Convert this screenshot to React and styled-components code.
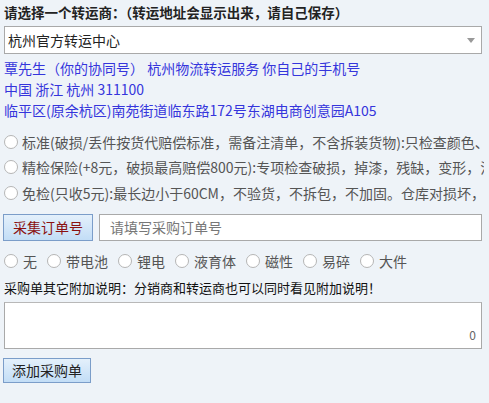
import React from "react";
import styled, { createGlobalStyle } from "styled-components";

const GlobalStyle = createGlobalStyle`
  html, body {
    margin: 0;
    padding: 0;
    background: #eef3f8;
  }
  body {
    font-family: "Noto Sans CJK SC", "Noto Sans", sans-serif;
    font-size: 14px;
    color: #222;
  }
`;

const Page = styled.div`
  width: 489px;
  height: 403px;
  box-sizing: border-box;
  padding: 2px 7px 0 4px;
  overflow: hidden;
`;

const Title = styled.div`
  font-weight: bold;
  font-size: 13.5px;
  line-height: 20px;
  color: #222;
`;

const SelectBox = styled.div`
  margin-top: 4px;
  height: 28px;
  box-sizing: border-box;
  border: 1px solid #a9a9a9;
  background: #fff;
  display: flex;
  align-items: center;
  justify-content: space-between;
  padding: 0 6px 0 3px;
  font-size: 14px;
  color: #222;
`;

const Caret = styled.span`
  width: 0;
  height: 0;
  border-left: 4px solid transparent;
  border-right: 4px solid transparent;
  border-top: 5px solid #999;
`;

const Address = styled.div`
  margin-top: 4px;
  color: #3535dc;
  font-size: 14px;
  line-height: 21px;
`;

const OptionList = styled.div`
  margin-top: 8px;
  margin-right: -2px;
  display: flex;
  flex-direction: column;
`;

const OptionRow = styled.label`
  display: flex;
  align-items: center;
  gap: 4px;
  height: 25.5px;
  white-space: nowrap;
  overflow: hidden;
  color: #555;
  font-size: 14px;
`;

const Radio = styled.input.attrs({ type: "radio" })`
  appearance: none;
  flex: none;
  margin: 0;
  width: 14px;
  height: 14px;
  border: 1px solid #b5b5b5;
  border-radius: 50%;
  background: #fff;
  box-sizing: border-box;
`;

const OrderRow = styled.div`
  margin-top: 8px;
  display: flex;
  gap: 6px;
  height: 27px;
`;

const Button = styled.button`
  flex: none;
  height: ${(p) => p.$h || 27}px;
  padding: 0 ${(p) => p.$px || 9}px;
  margin-left: -1px;
  border: 1px solid #7b9dc9;
  background: linear-gradient(#e4f0fb, #c2ddf6);
  color: ${(p) => p.$color || "#222"};
  font-family: inherit;
  font-size: 14px;
  cursor: pointer;
`;

const TextInput = styled.input`
  flex: 1;
  box-sizing: border-box;
  border: 1px solid #a9a9a9;
  background: #fff;
  padding: 0 10px;
  font-family: inherit;
  font-size: 14px;
  &::placeholder {
    color: #777;
  }
`;

const TagRow = styled.div`
  margin-top: 8px;
  display: flex;
  align-items: center;
  height: 24px;
`;

const TagLabel = styled.label`
  display: flex;
  align-items: center;
  gap: 5px;
  margin-right: 10px;
  color: #555;
  font-size: 14px;
  white-space: nowrap;
`;

const NoteLabel = styled.div`
  margin-top: 5px;
  font-size: 13px;
  line-height: 20px;
  color: #111;
`;

const NoteWrap = styled.div`
  position: relative;
  margin-top: 4px;
  height: 47px;
`;

const NoteArea = styled.textarea`
  width: 100%;
  height: 100%;
  box-sizing: border-box;
  border: 1px solid #a9a9a9;
  border-top-color: #b8b8b8;
  background: #fff;
  resize: none;
  font-family: inherit;
  font-size: 13px;
  display: block;
`;

const Counter = styled.span`
  position: absolute;
  right: 6px;
  bottom: 6px;
  font-size: 12px;
  color: #666;
`;

const Footer = styled.div`
  margin-top: 9px;
`;

const options = [
  "标准(破损/丢件按货代赔偿标准，需备注清单，不含拆装货物):只检查颜色、尺码、数量",
  "精检保险(+8元，破损最高赔偿800元):专项检查破损，掉漆，残缺，变形，污渍",
  "免检(只收5元):最长边小于60CM，不验货，不拆包，不加固。仓库对损坏，丢件不负责",
];

const tags = ["无", "带电池", "锂电", "液育体", "磁性", "易碎", "大件"];

export default function App() {
  return (
    <>
      <GlobalStyle />
      <Page>
        <Title>请选择一个转运商：（转运地址会显示出来，请自己保存）</Title>
        <SelectBox>
          <span>杭州官方转运中心</span>
          <Caret />
        </SelectBox>
        <Address>
          <div>覃先生（你的协同号） 杭州物流转运服务 你自己的手机号</div>
          <div>中国 浙江 杭州 311100</div>
          <div>临平区(原余杭区)南苑街道临东路172号东湖电商创意园A105</div>
        </Address>
        <OptionList>
          {options.map((text) => (
            <OptionRow key={text}>
              <Radio name="inspect" />
              {text}
            </OptionRow>
          ))}
        </OptionList>
        <OrderRow>
          <Button $color="#8a1010">采集订单号</Button>
          <TextInput placeholder="请填写采购订单号" />
        </OrderRow>
        <TagRow>
          {tags.map((t) => (
            <TagLabel key={t}>
              <Radio name="tag" />
              {t}
            </TagLabel>
          ))}
        </TagRow>
        <NoteLabel>采购单其它附加说明：分销商和转运商也可以同时看见附加说明！</NoteLabel>
        <NoteWrap>
          <NoteArea />
          <Counter>0</Counter>
        </NoteWrap>
        <Footer>
          <Button $h={25} $px={8}>添加采购单</Button>
        </Footer>
      </Page>
    </>
  );
}
